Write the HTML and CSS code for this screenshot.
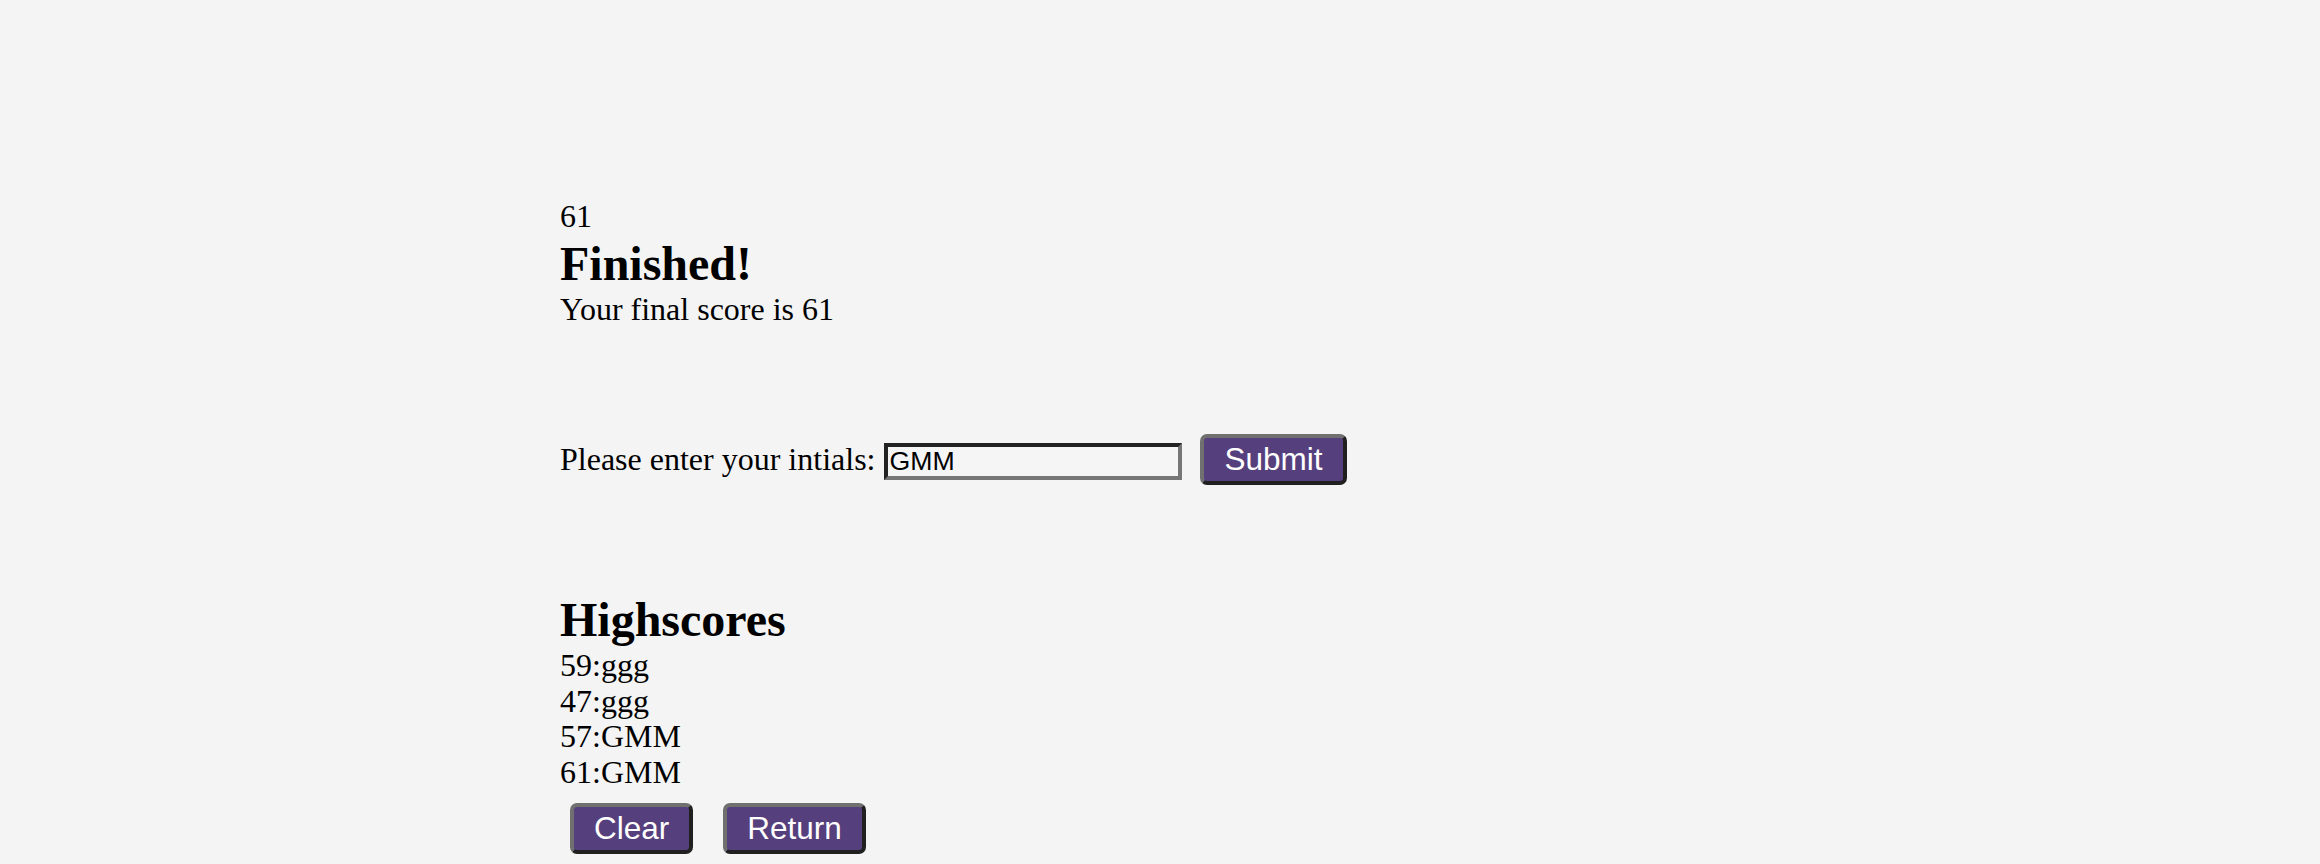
FILE: index.html
```html
<!DOCTYPE html>
<html lang="en">
<head>
    <meta charset="UTF-8">
    <meta name="viewport" content="width=device-width, initial-scale=1.0">
    <title>Code Quiz - Highscores</title>
    <link rel="stylesheet" href="styles.css">
</head>
<body>
    <main class="quiz">
        <div class="timer">61</div>
        <h2 class="heading">Finished!</h2>
        <p class="final">Your final score is 61</p>

        <form class="initials">
            <label for="initials" class="initials-label">Please enter your intials:</label>
            <input type="text" id="initials" class="initials-input" value="GMM">
            <button type="button" class="btn submit-btn">Submit</button>
        </form>

        <h2 class="heading highscores-title">Highscores</h2>
        <ul class="highscores">
            <li>59:ggg</li>
            <li>47:ggg</li>
            <li>57:GMM</li>
            <li>61:GMM</li>
        </ul>
        <div class="actions">
            <button type="button" class="btn">Clear</button>
            <button type="button" class="btn">Return</button>
        </div>
    </main>
</body>
</html>
```

FILE: styles.css
```css
body {
    margin: 0;
    padding: 0;
    background-color: #f4f4f4;
    color: #000;
    font-family: "Liberation Serif", "Times New Roman", serif;
    font-size: 32px;
    line-height: 35.5px;
}
.quiz {
    padding: 199px 0 0 560px;
}
.timer, .final {
    margin: 0;
}
.heading {
    margin: 0;
    font-size: 48px;
    line-height: 57px;
    font-weight: bold;
}
.initials {
    margin: 107px 0 0 0;
}
.initials-input {
    width: 298px;
    height: 37px;
    margin-left: 1px;
    padding: 0 1px;
    font-family: "Liberation Sans", Arial, sans-serif;
    font-size: 26.67px;
    color: #000;
    background-color: #f5f5f5;
    border: 4px solid;
    border-color: #222 #767676 #767676 #222;
    box-sizing: border-box;
    outline: none;
}
.btn {
    padding: 3px 20px;
    font-family: "Liberation Sans", Arial, sans-serif;
    font-size: 31.5px;
    line-height: normal;
    color: #fff;
    background-color: #563f7d;
    border: 4px solid;
    border-color: #707070 #202020 #202020 #707070;
    border-radius: 7px;
    cursor: pointer;
}
.btn:hover {
    background-color: #6a4f96;
}
.submit-btn {
    margin-left: 10px;
}
.highscores-title {
    margin-top: 106px;
}
.highscores {
    list-style: none;
    margin: 0;
    padding: 0;
}
.actions {
    display: flex;
    gap: 30px;
    margin-top: 13px;
    padding-left: 10px;
}
```
